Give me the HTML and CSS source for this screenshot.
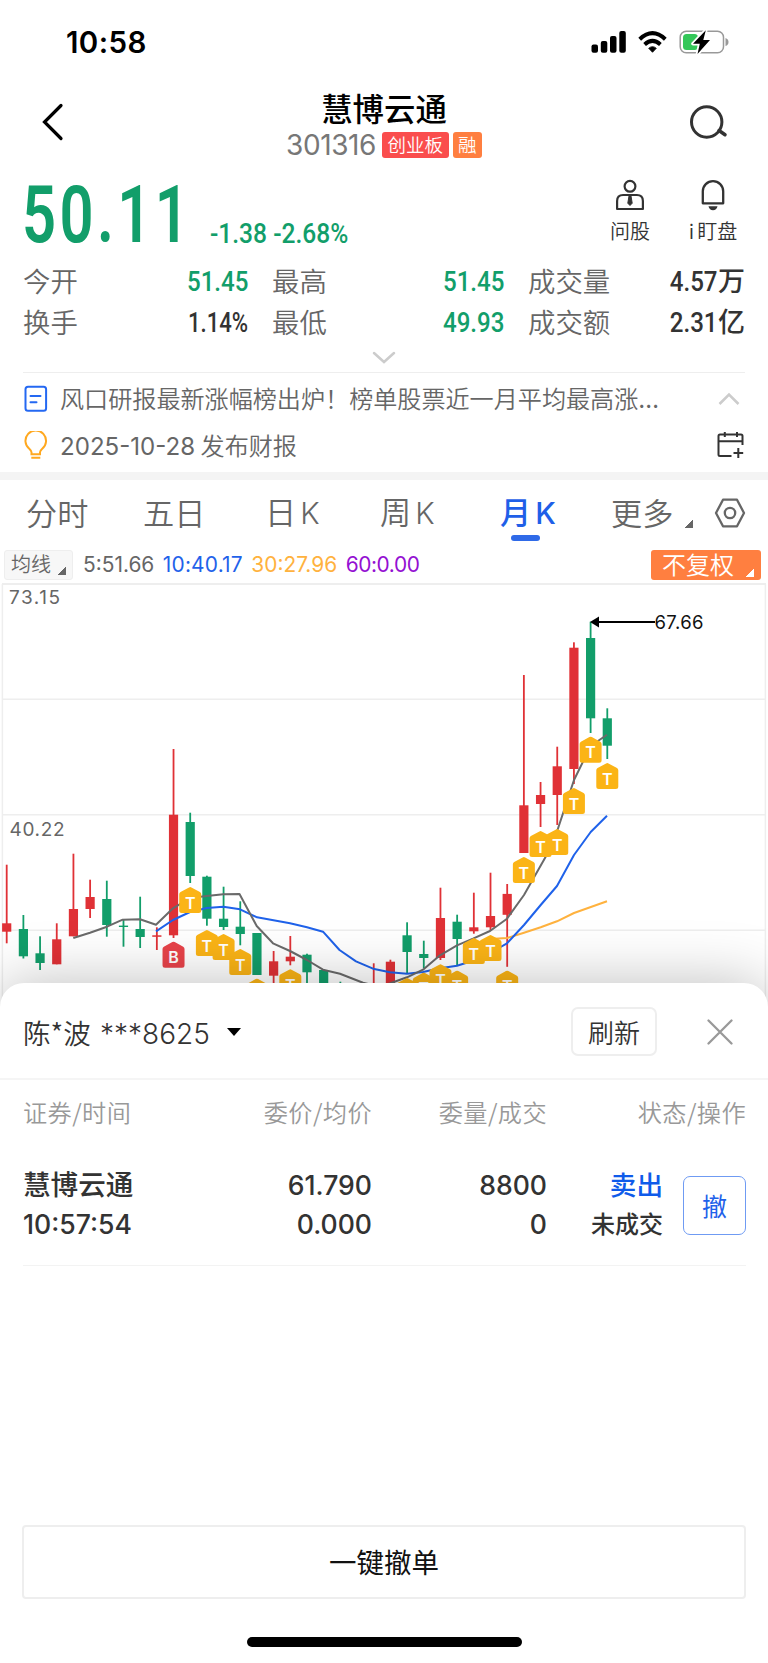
FILE: index.html
```html
<!DOCTYPE html>
<html lang="zh-CN">
<head>
<meta charset="utf-8">
<title>慧博云通 301316</title>
<link rel="stylesheet" href="styles.css">
</head>
<body>
<main class="screen">
  <div class="status">
    <span class="clock">10:58</span>
    <svg class="status-icons" viewBox="590 30 140 24" width="140" height="24">
      <rect x="591.5" y="44.5" width="6.5" height="8.3" rx="2"/>
      <rect x="600.8" y="41" width="6.5" height="11.8" rx="2"/>
      <rect x="610" y="36" width="6.5" height="16.8" rx="2"/>
      <rect x="619.3" y="31" width="6.5" height="21.8" rx="2"/>
      <g fill="none" stroke="#000" stroke-width="4">
        <path d="M639.7 39.2Q652.5 27.2 665.3 39.2"/>
        <path d="M644.6 44.4Q652.5 37.4 660.4 44.4"/>
      </g>
      <path d="M648.7 48.3Q652.5 45 656.3 48.3L652.5 52.3Z" stroke="#000" stroke-width=".8" stroke-linejoin="round"/>
      <rect x="680.2" y="31.2" width="43.3" height="21.5" rx="6" fill="none" stroke="#999" stroke-width="1.5"/>
      <path d="M725.5 38q3 1 3 4t-3 4z" fill="#999"/>
      <rect x="683" y="34" width="15" height="16" rx="3.5" fill="#34c759"/>
      <path d="M705.8 30.2L693 43.7h6.8L697.5 54 710 40h-6.700z" stroke="#fff" stroke-width="3.5" paint-order="stroke" stroke-linejoin="round"/>
    </svg>
  </div>

  <header class="head">
    <svg class="back" viewBox="0 0 24 38" width="24" height="38"><path d="M20 2.5L3.500 19 20 35.500" fill="none" stroke="#000" stroke-width="3.2" stroke-linecap="round"/></svg>
    <div class="title">
      <h1>慧博云通</h1>
      <div class="code"><span class="num">301316</span><b class="tag red">创业板</b><b class="tag orange">融</b></div>
    </div>
    <svg class="search" viewBox="0 0 40 36" width="40" height="36" fill="none" stroke="#333" stroke-width="3"><circle cx="18.7" cy="18" r="15.2"/><path d="M31 26.5l6 4.200" stroke-width="3.5" stroke-linecap="round"/></svg>
  </header>

  <section class="quote">
    <div class="price"><span class="din">50.11</span></div>
    <div class="change"><span class="din">-1.38 -2.68%</span></div>
    <div class="tools">
      <div class="tool">
        <svg viewBox="0 0 30 32" width="30" height="32" fill="none" stroke="#333" stroke-width="2.2"><circle cx="15" cy="7.3" r="5.4"/><path d="M2.1 30V22q0-6 6-6h13.8q6 0 6 6v8z" stroke-linejoin="round"/><path d="M14 17h2l1.2 7.200L15 26.500l-2.200-2.300z" fill="#333" stroke-width="1"/></svg>
        <span>问股</span>
      </div>
      <div class="tool">
        <svg viewBox="0 0 30 32" width="30" height="32" fill="none" stroke="#333" stroke-width="2.3"><path d="M4.800 24.300V12.300a10.200 10.200 0 0 1 20.400 0v12z" stroke-linejoin="round"/><path d="M10.500 27.300h9q-1 4-4.500 4t-4.500-4z" fill="#333" stroke="none"/></svg>
        <span><i>i</i>盯盘</span>
      </div>
    </div>
  </section>

  <section class="stats">
    <span>今开</span><b class="green"><i class="din">51.45</i></b><span>最高</span><b class="green"><i class="din">51.45</i></b><span>成交量</span><b><i class="din">4.57</i>万</b>
    <span>换手</span><b><i class="din percent">1.14%</i></b><span>最低</span><b class="green"><i class="din">49.93</i></b><span>成交额</span><b><i class="din">2.31</i>亿</b>
  </section>
  <div class="expand"><svg viewBox="0 0 24 14" width="24" height="14"><path d="M2 2l10 9L22 2" fill="none" stroke="#ccc" stroke-width="2.5" stroke-linecap="round"/></svg></div>

  <section class="news">
    <div class="news-row">
      <svg viewBox="0 0 24 28" width="24" height="28" fill="none" stroke="#2468f2" stroke-width="2"><rect x="1.5" y="1.7" width="20.6" height="24" rx="2.5"/><path d="M6.500 11h10M6.500 17.300h6" stroke-linecap="round"/></svg>
      <p>风口研报最新涨幅榜出炉！榜单股票近一月平均最高涨<span class="num">…</span></p>
      <svg viewBox="0 0 24 14" width="24" height="14"><path d="M2.500 12L12 2.500 21.500 12" fill="none" stroke="#ccc" stroke-width="2.5"/></svg>
    </div>
    <div class="news-row">
      <svg viewBox="0 0 24 28" width="24" height="28" fill="none" stroke="#ffa81f" stroke-width="2"><path d="M7.500 23.300v-2q0-1.500-2-3.300A10.300 10.300 0 1 1 18 18q-2 1.800-2 3.300v2zM7.300 26.700h9"/></svg>
      <p><span class="num">2025-10-28</span> 发布财报</p>
      <svg viewBox="0 0 27 28" width="27" height="28" fill="none" stroke="#333" stroke-width="2"><path d="M14.500 25H3q-1.500 0-1.500-1.500V5Q1.500 3.500 3 3.500h21q1.500 0 1.500 1.500v9M1.500 10.300h24M7.800 1v5M20 1v5M21.300 17v10M16.500 22h9.700"/></svg>
    </div>
  </section>

  <nav class="tabs">
    <span>分时</span><span>五日</span><span>日<i>K</i></span><span>周<i>K</i></span><span class="on">月<i>K</i></span><span class="more">更多<em class="corner"></em></span>
    <svg viewBox="0 0 32 30" width="32" height="30" fill="none" stroke="#666" stroke-width="2.3"><path d="M9 1.700h14L30 15l-7 13.300H9L2 15z" stroke-linejoin="round"/><circle cx="16" cy="15" r="5.2"/></svg>
  </nav>

  <div class="ma">
    <div class="ma-btn">均线<em class="corner"></em></div>
    <div class="ma-values"><span>5:51.66</span><span class="blue">10:40.17</span><span class="amber">30:27.96</span><span class="purple">60:0.00</span></div>
    <div class="adjust">不复权<em class="corner"></em></div>
  </div>

  <svg class="chart" id="chart" viewBox="0 583 768 430" width="768" height="430">
    <g stroke="#eee" stroke-width="1.5" fill="none">
      <path d="M2.400 584v430M765.400 584v430M2 699.200h764M2 814.800h764M2 930.300h764"/>
      <path d="M2 584h764" stroke-width="2"/>
    </g>
    <g class="axis"><text x="9" y="604" textLength="51">73.15</text><text x="9.5" y="836" textLength="55">40.22</text></g>
    <g id="candles"></g>
    <g fill="none" stroke-width="2" stroke-linejoin="round">
      <path stroke="#ffb23e" d="M490 939L507 938L524 932.7L540.7 927.3L557 921.3L574 913L607 901.3"/>
      <path stroke="#1f62ea" d="M156 931.3L173 920L190 912L206.7 908L223.3 906.7L240 909.3L257 917.3L290 923.3L307 927.3L323 931.7L339.5 950L356 961.3L373 968.7L390 972.3L407 973.7L423 972L440 968.3L457 965.7L473 960.7L490 953L507 943.3L524 925L540.7 905L557 886L574 855L590.7 832L607 815.7"/>
      <path stroke="#6a6a6a" d="M73.3 938L90 932.7L107 926.7L122.7 919.7L140 919.3L156 924.7L173 908.3L190 898L206.7 896L223.3 894.3L239.5 894L256.7 926L273 943.3L290 951L307 960L323 969.7L340 973.7L363 982.7L380 987L407 977.3L423 969.7L440 955.3L457 945.3L473 938.7L490 931L507 918.7L524 895L545.7 856.7L557.5 830L574 780L590.7 746L607 734.7"/>
    </g>
    <g id="marks"></g>
    <path d="M597 622h58" stroke="#000" stroke-width="2"/>
    <path d="M590 622l9-5.500v11z"/>
    <text class="peak" x="654.5" y="629" textLength="49">67.66</text>
  </svg>

  <section class="sheet">
    <div class="sheet-head">
      <div class="account">陈*波 <span class="num">***8625</span></div>
      <svg class="caret" viewBox="0 0 14 8" width="14" height="8"><path d="M0 0h14L7 8z"/></svg>
      <button class="refresh">刷新</button>
      <svg class="close" viewBox="0 0 26 26" width="26" height="26"><path d="M1.500 1.500l23 23M24.500 1.500l-23 23" stroke="#999" stroke-width="2.3" stroke-linecap="round"/></svg>
    </div>
    <div class="cols labels"><span>证券/时间</span><span>委价/均价</span><span>委量/成交</span><span>状态/操作</span></div>
    <div class="cols order">
      <div><p class="cn">慧博云通</p><p>10:57:54</p></div>
      <div><p>61.790</p><p>0.000</p></div>
      <div><p>8800</p><p>0</p></div>
      <div class="state"><p class="sell">卖出</p><p class="pending">未成交</p></div>
      <button class="cancel">撤</button>
    </div>
    <button class="cancel-all">一键撤单</button>
    <div class="home"></div>
  </section>
</main>
<script src="chart.js"></script>
</body>
</html>
```
FILE: styles.css
```css
* { box-sizing: border-box; }
body, h1, p { margin: 0; font-weight: 400; }
body { width: 768px; background: #fff; color: #333; font-family: "Noto Sans CJK SC", sans-serif; }
i, em { font-style: normal; }
svg { display: block; flex: none; }
button { font: inherit; padding: 0; background: #fff; color: inherit; display: flex; align-items: center; justify-content: center; }
.screen { width: 768px; height: 1663px; overflow: hidden; display: flex; flex-direction: column; }
.screen > * { flex: none; }
.num { font-family: Inter, sans-serif; }
.din { display: inline-block; font-family: Roboto, sans-serif; font-weight: 500; transform: scaleX(.86); }
.green { color: #129e6a; }

.status { height: 84px; padding: 0 38px 0 66px; display: flex; justify-content: space-between; align-items: center; color: #000; }
.clock { font: 600 29.5px/34px Inter, sans-serif; letter-spacing: .4px; }

.head { height: 92px; padding: 0 40px 0 41px; display: flex; justify-content: space-between; }
.back { margin-top: 19px; }
.search { margin-top: 20px; }
.title { display: flex; flex-direction: column; align-items: center; margin-left: 15px; }
.title h1 { font-size: 31.4px; line-height: 44px; font-weight: 500; color: #000; margin-top: 2px; }
.code { display: flex; align-items: center; gap: 4px; height: 26px; margin-top: 2px; }
.code .num { font-size: 28px; font-weight: 370; line-height: 26px; color: #777; margin-right: 2px; letter-spacing: -.4px; }
.tag { height: 26px; border-radius: 3px; font-size: 18.5px; line-height: 24px; font-weight: 350; color: #fff; padding: 0 5.5px; }
.red { background: #fa4d4d; }
.orange { background: #ff7f40; }

.quote { height: 84px; display: flex; padding: 0 18px 0 23px; color: #129e6a; }
.price { width: 187px; font-size: 80px; line-height: 62px; letter-spacing: 4.6px; white-space: nowrap; }
.price .din { transform-origin: left; transform: scaleX(.745); margin: 0 0 0 -1px; font-weight: 600; }
.change { width: 200px; font-size: 28px; line-height: 40px; padding-top: 35px; white-space: nowrap; }
.change .din { transform-origin: left; transform: scaleX(.877); }
.tools { margin-left: auto; display: flex; gap: 9px; color: #333; }
.tool { width: 74px; display: flex; flex-direction: column; align-items: center; padding-top: 3px; font-size: 20px; line-height: 30px; white-space: nowrap; }
.tool span { margin-top: 5px; font-weight: 350; }
.tool i { margin-right: 3px; }

.stats { display: grid; grid-template-columns: 83px 166px 106px 150px 114px 103px; grid-template-rows: 41px 41px; margin: 0 23px; line-height: 40px; font-size: 27.4px; color: #666; font-weight: 350; }
.stats b { text-align: right; font-weight: 500; color: #333; white-space: nowrap; padding-right: 24px; font-size: 27px; }
.stats b:nth-child(6n) { padding-right: 0; }
.stats b.green { color: #129e6a; }
.stats .din { font-size: 28px; transform-origin: right; }
.stats .percent { transform: scaleX(.79); }
.expand { height: 31px; display: flex; justify-content: center; padding-top: 9px; border-bottom: 1px solid #eee; margin: 0 23px; }

.news { height: 107px; border-bottom: 8px solid #f4f4f4; padding: 3px 24px 0 24px; color: #666; }
.news-row { height: 46px; display: flex; align-items: center; justify-content: space-between; font-size: 24.1px; font-weight: 350; }
.news-row p { flex: 1; padding: 0 0 3px 12px; white-space: nowrap; font-weight: 350; }
.news-row .num { font-weight: 400; }
.news-row > svg:last-child { margin-right: 3px; }
.news-row + .news-row > svg:last-child { margin-right: 0; }
.news-row + .news-row p { padding-bottom: 1px; }

.tabs { height: 69px; display: grid; grid-template-columns: 117px 122px 115px 120px 111px 103px 32px; align-items: center; padding: 0 0 6px 26px; font-size: 31.2px; line-height: 44px; color: #666; font-weight: 350; }
.tabs svg { margin-top: 3px; }
.tabs span { position: relative; white-space: nowrap; }
.tabs i { font-family: Inter, sans-serif; margin-left: 4px; font-size: 30px; }
.tabs .on { color: #1f5fe8; font-weight: 500; }
.tabs .on::after { content: ""; position: absolute; left: 11px; bottom: -6px; width: 29px; height: 6px; border-radius: 3px; background: #2f6ae8; }
.corner { display: inline-block; width: 8px; height: 8px; margin-left: 12px; background: linear-gradient(135deg, transparent 50%, currentColor 50%); }
.more .corner { vertical-align: -3px; }

.ma { height: 34px; padding: 1px 7px 3px 4px; display: flex; align-items: center; color: #666; }
.ma-btn { width: 69px; height: 30px; background: #f7f7f7; border: 1px solid #eee; border-radius: 3px; font-size: 20px; line-height: 26px; padding-left: 6px; white-space: nowrap; font-weight: 350; }
.ma-btn .corner { margin-left: 7px; vertical-align: -3px; }
.ma-values { font: 20.9px/28px Inter, sans-serif; display: flex; gap: 8.5px; margin-left: 10px; }
.blue { color: #1f62ea; letter-spacing: .2px; }
.amber { color: #ffb23e; }
.purple { color: #9410d2; letter-spacing: -.4px; }
.adjust { margin-left: auto; width: 110px; height: 30px; border-radius: 3px; background: #ff7f40; color: #fff; font-size: 24px; line-height: 27px; padding-left: 11px; white-space: nowrap; font-weight: 350; }
.adjust .corner { vertical-align: -3px; }

.chart { margin-bottom: -30px; }
.chart .axis { font: 19px Inter, sans-serif; fill: #666; }
.chart .peak { font: 18.5px Inter, sans-serif; fill: #111; }
.chart .mark { font: 600 16px Inter, sans-serif; fill: #fff; text-anchor: middle; }

.sheet { position: relative; height: 680px; background: #fff; border-radius: 24px 24px 0 0; box-shadow: 0 0 60px rgba(0, 0, 0, .26); display: flex; flex-direction: column; }
.sheet-head { height: 97px; border-bottom: 2px solid #f5f5f5; display: flex; align-items: center; padding: 2px 35px 0 23px; font-size: 27.6px; }
.account { white-space: nowrap; font-weight: 350; }
.account .num { font-size: 28px; margin-left: 3px; }
.caret { margin-left: 17px; }
.refresh { margin-left: auto; width: 86px; height: 49px; border: 2px solid #eee; border-radius: 7px; font-size: 26px; font-weight: 350; }
.close { margin-left: 50px; }
.cols { display: grid; grid-template-columns: 174px 175px 175px 116px 83px; margin-left: 23px; text-align: right; white-space: nowrap; }
.cols > :first-child { text-align: left; }
.labels { height: 66px; line-height: 64px; font-size: 24.2px; letter-spacing: .4px; color: #999; font-weight: 350; }
.labels span:nth-child(4) { grid-column: 4 / 6; }
.order { height: 120px; width: 723px; padding-top: 20px; border-bottom: 1px solid #f3f3f3; font: 500 26.6px/39px Inter, "Noto Sans CJK SC", sans-serif; }
.order p { font-weight: 500; }
.order .cn { font-size: 27.6px; }
.order .sell { color: #0f5bea; }
.order .pending { font-size: 24px; }
.order .cancel { justify-self: end; width: 63px; height: 59px; margin-top: 10px; border: 1.5px solid #6f9bf3; border-radius: 7px; color: #1f62ea; font: 25px "Noto Sans CJK SC", sans-serif; padding-bottom: 2px; }
.cancel-all { margin: 259px 22px 0; height: 74px; border: 2px solid #eee; border-radius: 4px; font-size: 27.5px; color: #111; padding-bottom: 3px; }
.home { width: 275px; height: 10px; border-radius: 5px; background: #000; margin: 38px auto 0; }
```
FILE: chart.js
```js
const STEP = 16.683, START = 6.7;
const RED = '#e03136', GREEN = '#129e6a';
// colour, high, body top, body bottom, low
const candles = [
  ['r', 864.7, 923.3, 931.7, 943.3], ['g', 915, 929, 956.3, 958.5], ['g', 936.3, 953.3, 963, 970],
  ['r', 923.3, 939.3, 964.3, 964.3], ['r', 853.7, 909, 936.3, 936.3], ['r', 879.7, 897, 909, 918],
  ['g', 880.7, 899, 925, 936.7], ['g', 919.5, 925.6, 927, 946.7], ['g', 896.7, 929, 937, 948],
  ['r', 927.3, 935.3, 936.8, 950], ['r', 749, 814.7, 935.3, 938], ['g', 812.7, 822, 876, 883],
  ['g', 875.7, 876.7, 918.7, 925.7], ['g', 886.7, 918.7, 927, 930], ['g', 901.3, 926.7, 934, 945.3],
  ['g', 933, 933, 975, 975], ['r', 951, 961.3, 975.7, 990], ['r', 936, 956.7, 961.3, 965.3],
  ['g', 953.7, 954.7, 972.3, 990], ['g', 969.5, 970, 990, 995], ['g', 981.7, 990, 995, 999],
  null, ['r', 963.3, 990, 995, 999], ['r', 959.7, 961.7, 990, 995],
  ['g', 922.3, 935.3, 952, 973.3], ['g', 940.7, 954, 958, 968], ['r', 887.7, 918, 958, 960],
  ['g', 914.7, 921.7, 939, 966], ['r', 892.7, 927.3, 931.3, 933.7], ['r', 872.7, 916, 927.3, 930],
  ['r', 884, 893.9, 914.8, 966.8], ['r', 675, 805.3, 853, 853], ['r', 782, 795, 804, 827],
  ['r', 746.7, 766.3, 795, 825], ['r', 642.3, 647.7, 769, 784], ['g', 621.7, 638, 718.3, 733],
  ['g', 708.3, 718.3, 745.7, 759]
];
// candle index, roof top
const marks = [
  [11, 887], [12, 930], [13, 934], [14, 949], [15, 978.7], [17, 969.3], [24, 978], [25, 972.7],
  [27, 970.7], [26, 964.3], [28, 938], [29, 935], [30, 970.7], [31, 857], [32, 831], [33, 829],
  [34, 788], [35, 736.7], [36, 763]
];
const x = i => START + STEP * i;
document.getElementById('candles').innerHTML = candles.map((c, i) => {
  if (!c) return '';
  const [k, high, top, bottom, low] = c;
  return `<g fill="${k === 'r' ? RED : GREEN}"><rect x="${x(i) - 0.9}" y="${high}" width="1.8" height="${low - high}"/>` +
    `<rect x="${x(i) - 4.6}" y="${top}" width="9.2" height="${bottom - top}"/></g>`;
}).join('');
const badge = (i, y, letter, fill) =>
  `<path transform="translate(${x(i)} ${y})" fill="${fill}" d="M-1.2 .4Q0 -.4 1.2 .4L9.7 5Q11 5.8 11 7.3V23.5Q11 26 8.5 26H-8.5Q-11 26 -11 23.5V7.3Q-11 5.8 -9.7 5Z"/>` +
  `<text class="mark" x="${x(i)}" y="${y + 21.5}">${letter}</text>`;
document.getElementById('marks').innerHTML =
  badge(10, 941.7, 'B', '#e8434a') + marks.map(([i, y]) => badge(i, y, 'T', '#fbb416')).join('');
```
